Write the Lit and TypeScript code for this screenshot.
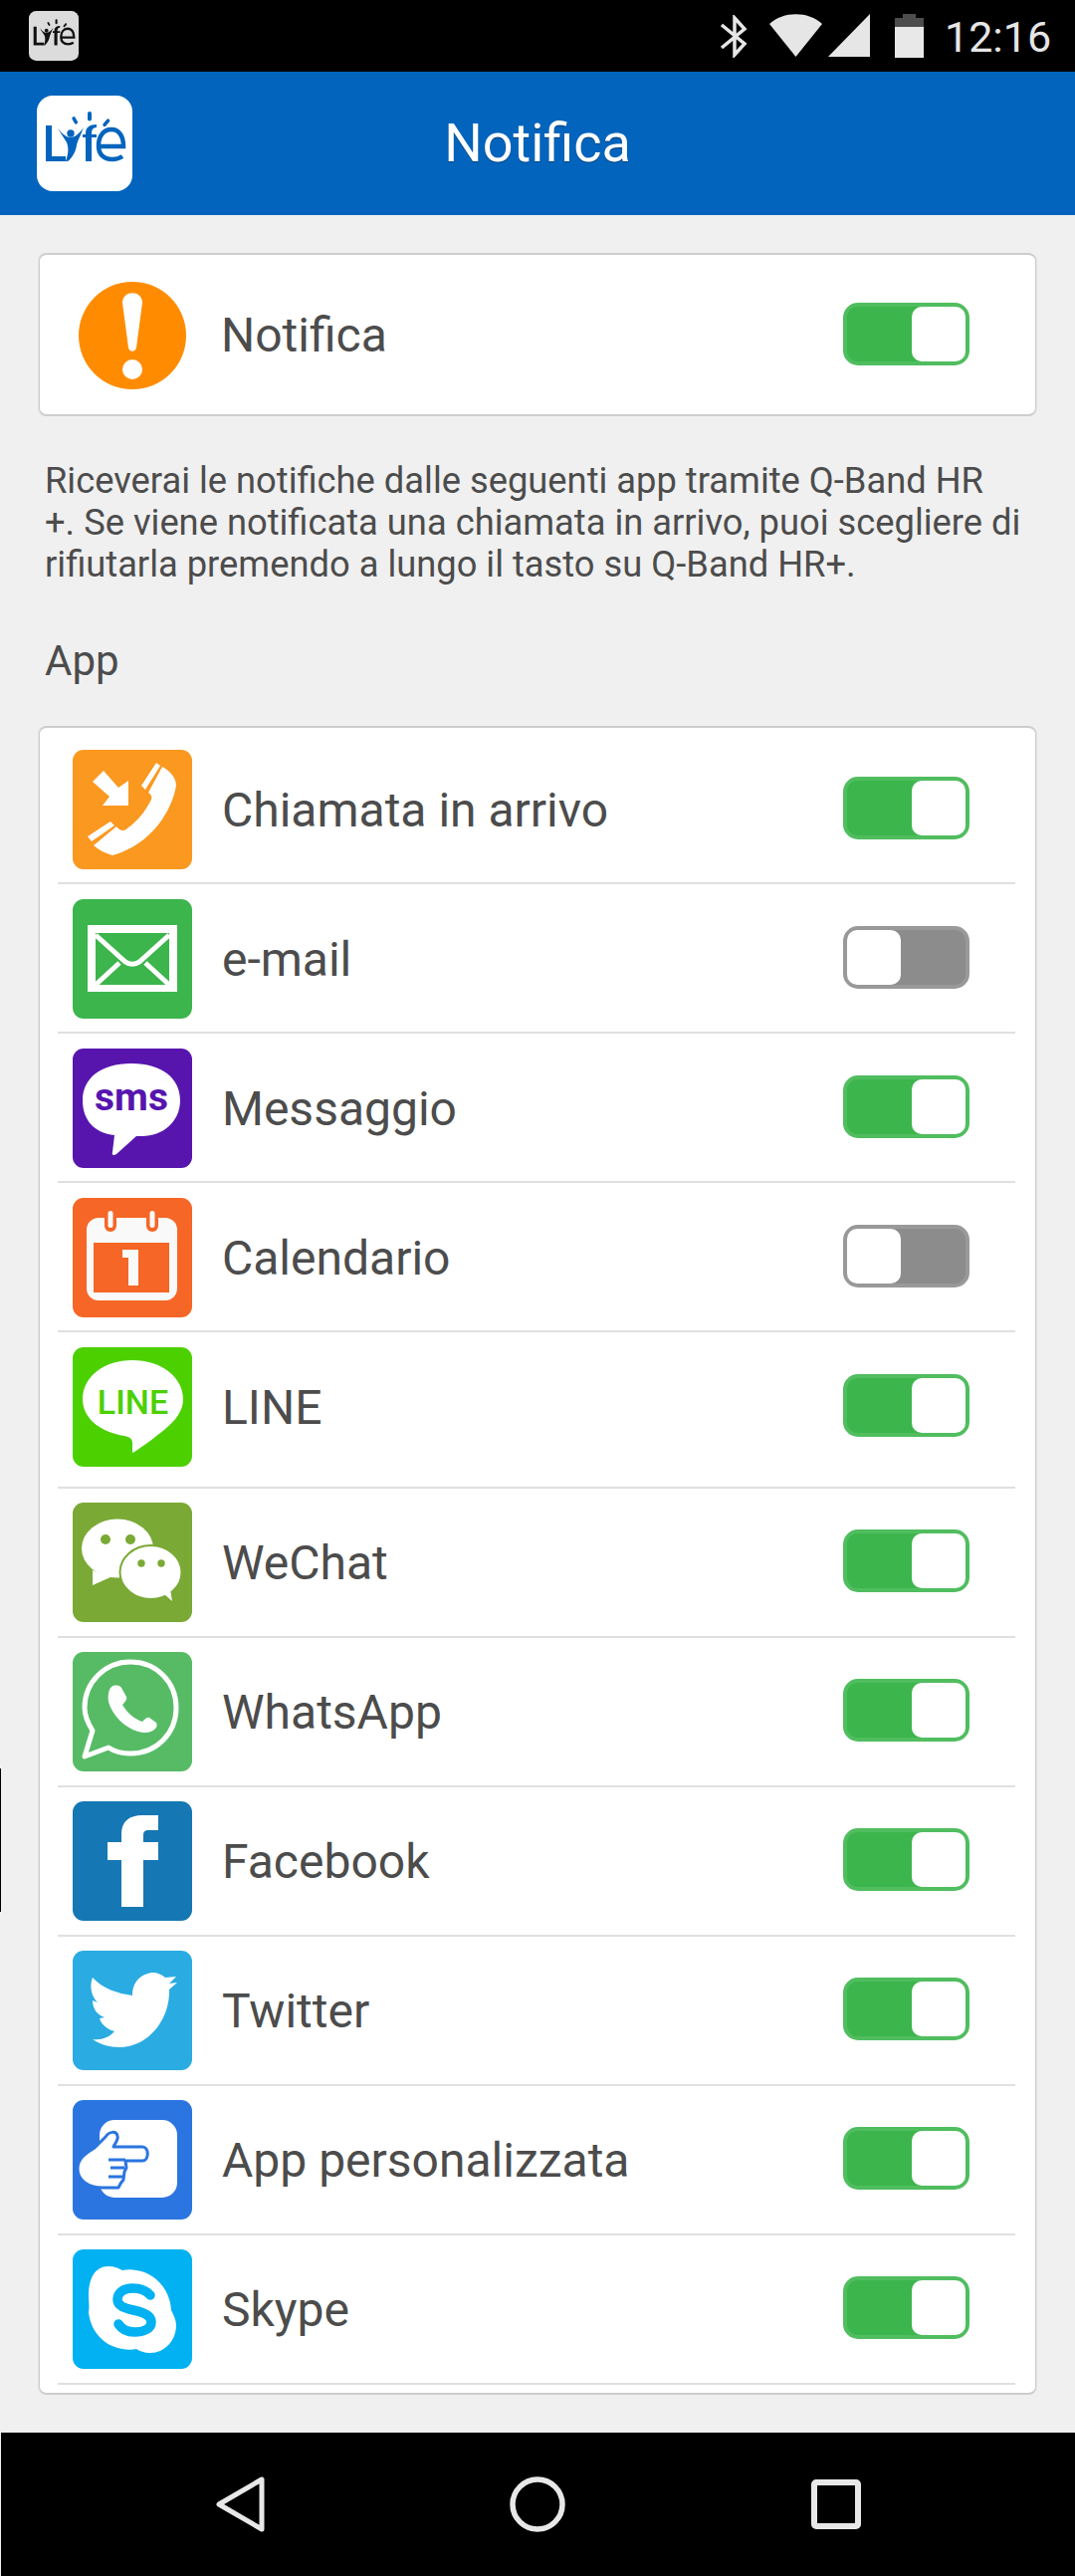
import { LitElement, html, css, svg } from "lit";
import { customElement } from "lit/decorators.js";

const ico = (bg: string, body: unknown) => html`<svg class="ico" viewBox="0 0 120 120"><rect width="120" height="120" rx="11" fill=${bg}></rect>${body}</svg>`;

const lifeLogo = (c: string) => svg`
  <g fill=${c}>
    <path d="M9 30h6v31h14v5H9z"/>
    <path d="M21 33C26 39 30 42 34 42 38 42 43 38 47 32 44 40 41 45 40 50 39 56 36 62 31 66H29C32 58 32 52 30 47 27 42 24 38 21 33z"/>
    <circle cx="34" cy="38" r="3.700"/>
    <rect x="36.500" y="21" width="3.500" height="8" rx="1.700" transform="rotate(-30 38 25)"/>
    <rect x="51" y="16" width="4" height="9.500" rx="2"/>
    <rect x="68" y="23" width="3.500" height="9" rx="1.700" transform="rotate(40 70 27.500)"/>
    <path d="M49 66V42h-3v-3h3v-1c0-6 4-9 11-9v3c-3 0-5 2-5 6v1h5v3h-5v24z"/>
  </g>
  <path d="M62 51H87C87 40 82 34 75 34 67 34 62 41 62 50 62 59 67 64 76 64 80 64 83 63 86 61" fill="none" stroke=${c} stroke-width="4.500"/>`;

const icons: Record<string, unknown> = {
  call: ico("#fa981f", svg`<g fill="#fff">
    <path d="M31 21L46 38 56 31V56H30L37 47 20 32z"/>
    <path d="M69 36L84 13 88 16 73 40z"/>
    <path d="M90 17C96 20 104 27 104 36 100 60 80 95 40 106 33 104 27 101 21 96L44 77C48 82 52 82 56 78 66 71 74 60 79 50 80 47 79 45 76 43z"/>
    <path d="M15 87L38 72 42 76 19 92z"/>
  </g>`),
  mail: ico("#3cb54c", svg`<rect x="15" y="26" width="90" height="67" fill="#fff"/>
    <rect x="23" y="34" width="74" height="52" fill="#3cb54c"/>
    <path d="M23 36L53 63C57 66 63 66 67 63L97 36M23 86L47 64M97 86L73 64" fill="none" stroke="#fff" stroke-width="5"/>`),
  sms: ico("#5715ae", svg`<path d="M59 15C90 15 108 30 108 52 108 74 90 88 70 88H64L44 106C41 108 39 107 40 104L42 87C22 85 10 72 10 52 10 30 28 15 59 15z" fill="#fff"/>
    <text x="59" y="62" text-anchor="middle" class="smst">sms</text>`),
  cal: ico("#f66626", svg`<rect x="14" y="20" width="91" height="83" rx="12" fill="#f9f9f9"/>
    <rect x="21" y="45" width="76" height="50" fill="#f66626"/>
    <rect x="32" y="10" width="12" height="24" rx="6" fill="#f66626"/>
    <rect x="74" y="10" width="12" height="24" rx="6" fill="#f66626"/>
    <rect x="35.500" y="13" width="5" height="17" rx="2.500" fill="#f9f9f9"/>
    <rect x="77.500" y="13" width="5" height="17" rx="2.500" fill="#f9f9f9"/>
    <path d="M50 52H66V88H56V60H50z" fill="#f9f9f9"/>`),
  line: ico("#4cd000", svg`<path d="M60 13C89 13 111 30 111 52 111 64 103 74 92 83 82 91 70 100 62 105 60 107 60 105 60 103V96C60 92 57 90 52 89 27 85 10 71 10 52 10 30 31 13 60 13z" fill="#fff"/>
    <text x="60.500" y="67" text-anchor="middle" class="linet">LINE</text>`),
  wechat: ico("#7aa935", svg`<ellipse cx="45" cy="46" rx="36" ry="29.500" fill="#fff"/>
    <path d="M20 68V83L38 75z" fill="#fff"/>
    <circle cx="33" cy="37" r="5" fill="#7aa935"/><circle cx="58" cy="37" r="5" fill="#7aa935"/>
    <ellipse cx="78.500" cy="70" rx="31" ry="27" fill="#fff" stroke="#7aa935" stroke-width="2"/>
    <path d="M92 92L100 99 98 87z" fill="#fff"/>
    <circle cx="69" cy="61" r="3.700" fill="#7aa935"/><circle cx="89" cy="61" r="3.700" fill="#7aa935"/>`),
  wa: ico("#57bb66", svg`<path d="M12 105L20 79C15 71 12 64 12 56 12 30 33 10 58 10 84 10 104 30 104 56 104 82 84 102 58 102 50 102 42 100 36 96z" fill="none" stroke="#fff" stroke-width="5" stroke-linejoin="round"/>
    <path d="M39 35C42 33 47 33 49 36L54 45C55 47 53 50 50 53 54 60 61 67 70 70 73 67 75 65 77 66L84 71C85 73 85 75 83 77 80 81 72 82 66 80 52 76 40 64 36 50 35 44 36 38 39 35z" fill="#fff"/>`),
  fb: ico("#1577b4", svg`<path d="M49 106V59H35V41H49V33C49 20 57 14 70 14H86V29H76C72 29 71 31 71 35V41H86V59H71V106z" fill="#fff"/>`),
  tw: ico("#2aabe2", svg`<path d="M20 27C30 38 45 43 60 45 60 30 70 23 80 22 85 22 90 24 93 27L104 26 97 33 105 32 97 39C98 70 75 97 47 97 37 97 27 94 20 89 29 90 37 87 42 81 34 79 29 74 27 68L32 67C24 64 20 58 20 50L25 52C18 45 17 35 20 27z" fill="#fff"/>`),
  custom: ico("#2b75e0", svg`<rect x="27" y="20" width="78" height="78" rx="15" fill="#fff"/>
    <path d="M5 69C5 58 14 53 22 48L33 37C37 31 44 31 45 36 46 39 44 42 42 45L41 47H70C77 47 77 61 70 61H53L54 68 52 72 51 80 48 84 46 88H30C15 88 5 80 5 69z" fill="#fff" stroke="#2b75e0" stroke-width="3" stroke-linejoin="round"/>
    <path d="M36 60H53M38 68H52M36 77H50" stroke="#2b75e0" stroke-width="3" fill="none"/>`),
  skype: ico("#02b1f1", svg`<path d="M36 17C42 17 46 19 50 21 55 20 59 20 64 21 84 24 98 41 99 61 102 67 104 72 104 76 104 92 92 104 78 104 72 104 67 102 64 100 59 101 55 101 50 100 31 97 18 82 16 63 17 58 16 53 16 45 16 30 22 17 36 17z" fill="#fff"/>
    <path d="M78 46C73 40 67 39 60 39 52 39 45 43 45 50 45 57 52 59 61 61 71 63 79 66 79 73 79 80 71 83 62 83 55 83 50 81 46 75" fill="none" stroke="#02b1f1" stroke-width="9.500" stroke-linecap="round"/>`),
};

const apps: { name: string; icon: string; on: boolean; cls?: string }[] = [
  { name: "Chiamata in arrivo", icon: "call", on: true },
  { name: "e-mail", icon: "mail", on: false },
  { name: "Messaggio", icon: "sms", on: true },
  { name: "Calendario", icon: "cal", on: false },
  { name: "LINE", icon: "line", on: true, cls: "tall" },
  { name: "WeChat", icon: "wechat", on: true, cls: "after" },
  { name: "WhatsApp", icon: "wa", on: true, cls: "after" },
  { name: "Facebook", icon: "fb", on: true, cls: "after" },
  { name: "Twitter", icon: "tw", on: true, cls: "after" },
  { name: "App personalizzata", icon: "custom", on: true, cls: "after" },
  { name: "Skype", icon: "skype", on: true, cls: "after" },
];

@customElement("app-root")
export class AppRoot extends LitElement {
  static styles = css`
    :host { display: block; width: 1080px; height: 2587px; background: #f0f0f0; font-family: Roboto, "Liberation Sans", sans-serif; position: relative; overflow: hidden; color: #4c4c4c; }
    .page { display: flex; flex-direction: column; height: 2587px; }
    .status { height: 72px; background: #000; position: relative; flex: none; }
    .status svg { position: absolute; }
    .time { position: absolute; left: 949px; top: 13px; font-size: 43px; line-height: 49px; color: #e6e6e6; }
    .bar { height: 144px; flex: none; background: #0264bd; display: flex; align-items: center; justify-content: center; position: relative; box-sizing: border-box; }
    .logo { position: absolute; left: 37px; top: 24px; width: 96px; height: 96px; }
    .title { color: #fff; font-size: 54px; line-height: 60px; text-shadow: 0 1px 1px rgba(0,0,0,.4); }
    .content { flex: 1; padding: 38px 39px 0; display: flex; flex-direction: column; }
    .card { background: #fff; border: 1px solid #cdcdcd; border-top-width: 2px; border-bottom-width: 2px; border-radius: 8px; box-sizing: border-box; box-shadow: -1px 0 0 #e2e2e2, 1px 0 0 #e2e2e2; }
    .top { height: 164px; display: flex; align-items: center; padding-left: 39px; position: relative; }
    .warn { width: 108px; height: 108px; margin-right: 35px; margin-top: 1px; flex: none; }
    .lbl { font-size: 48px; line-height: 54px; flex: 1; white-space: nowrap; }
    .top .lbl { position: relative; top: 1px; }
    .desc { font-size: 36.3px; line-height: 42px; margin: 44px 0 0 6px; width: 1000px; height: 126px; white-space: pre-line; }
    .sec { font-size: 42px; line-height: 46px; margin: 53px 0 0 6px; height: 46px; }
    .list { margin-top: 42px; height: 1676px; padding: 7px 20px 0 18px; }
    .row { height: 150px; box-sizing: border-box; border-bottom: 2px solid #e0e0e0; padding: 15px 0 0 15px; display: flex; align-items: flex-start; }
    .row.tall { height: 157px; }
    .row.after { padding-top: 14px; }
    .ico { width: 120px; height: 120px; flex: none; margin-right: 30px; display: block; }
    .row .lbl { line-height: 120px; position: relative; top: 1px; }
    .toggle { width: 127px; height: 63px; border-radius: 15px; box-sizing: border-box; border: 4px solid; flex: none; display: flex; position: relative; }
    .row .toggle { margin: 27px 46px 0 0; }
    .top .toggle { margin: 0 66px 0 0; top: -1px; }
    .toggle.on { background: #3cb54c; border-color: #50bd5f; justify-content: flex-end; }
    .toggle.off { background: #8c8c8c; border-color: #999; justify-content: flex-start; }
    .knob { width: 54px; height: 55px; background: #fff; border-radius: 10px; }
    .nav { height: 144px; flex: none; background: #000; margin-left: 1px; position: relative; display: flex; align-items: center; }
    .nav svg { position: absolute; }
    .edge { position: absolute; left: 0; top: 1776px; width: 1px; height: 144px; background: #000; }
    .smst { font: 700 39px Roboto, "Liberation Sans", sans-serif; fill: #5715ae; }
    .linet { font: 500 34px Roboto, "Liberation Sans", sans-serif; fill: #4cd000; }
  `;

  toggle(on: boolean) {
    return html`<div class="toggle ${on ? "on" : "off"}"><div class="knob"></div></div>`;
  }

  render() {
    return html`<div class="page">
      <div class="status">
        <svg style="left:29px;top:11px" width="50" height="50" viewBox="0 0 96 96"><rect width="96" height="96" rx="14" fill="#dcdcdc"></rect>${lifeLogo("#111")}</svg>
        <svg style="left:723px;top:15px" width="28" height="43" viewBox="0 0 28 43"><path d="M2 10L25 29 15 40V3L25 14 2 33" fill="none" stroke="#e6e6e6" stroke-width="3.500"></path></svg>
        <svg style="left:773px;top:14px" width="53" height="43" viewBox="0 0 53 43"><path d="M0 10C14-3 39-3 53 10L26.500 43z" fill="#e6e6e6"></path></svg>
        <svg style="left:831px;top:14px" width="44" height="43" viewBox="0 0 44 43"><path d="M43 0v43H1z" fill="#e6e6e6"></path></svg>
        <svg style="left:899px;top:14px" width="29" height="44" viewBox="0 0 29 44"><path d="M8 0h13v4h8v40H0V4h8z" fill="#e8e8e8"></path><path d="M8 0h13v4h8v9H0V4h8z" fill="#4d4d4d"></path></svg>
        <div class="time">12:16</div>
      </div>
      <div class="bar">
        <svg class="logo" viewBox="0 0 96 96"><rect width="96" height="96" rx="16" fill="#fff"></rect>${lifeLogo("#0264bd")}</svg>
        <div class="title">Notifica</div>
      </div>
      <div class="content">
        <div class="card top">
          <svg class="warn" viewBox="0 0 108 108"><circle cx="54" cy="54" r="54" fill="#ff8c00"></circle><path d="M44 21C44 8 64 8 64 21L58 66C57 71 51 71 50 66z" fill="#fff"></path><circle cx="54" cy="88" r="10" fill="#fff"></circle></svg>
          <div class="lbl">Notifica</div>
          ${this.toggle(true)}
        </div>
        <div class="desc">Riceverai le notifiche dalle seguenti app tramite Q-Band HR
+. Se viene notificata una chiamata in arrivo, puoi scegliere di
rifiutarla premendo a lungo il tasto su Q-Band HR+.</div>
        <div class="sec">App</div>
        <div class="card list">
          ${apps.map((a) => html`<div class="row ${a.cls ?? ""}">${icons[a.icon]}<div class="lbl">${a.name}</div>${this.toggle(a.on)}</div>`)}
        </div>
      </div>
      <div class="nav">
        <svg style="left:215px;top:44px" width="50" height="56" viewBox="0 0 50 56"><path d="M47 3V53L4 28z" fill="none" stroke="#e8e8e8" stroke-width="5" stroke-linejoin="round"></path></svg>
        <svg style="left:511px;top:44px" width="56" height="56" viewBox="0 0 56 56"><circle cx="28" cy="28" r="25" fill="none" stroke="#e8e8e8" stroke-width="5.500"></circle></svg>
        <svg style="left:814px;top:47px" width="50" height="50" viewBox="0 0 50 50"><rect x="3" y="3" width="44" height="44" rx="2" fill="none" stroke="#e8e8e8" stroke-width="6"></rect></svg>
      </div>
      <div class="edge"></div>
    </div>`;
  }
}
